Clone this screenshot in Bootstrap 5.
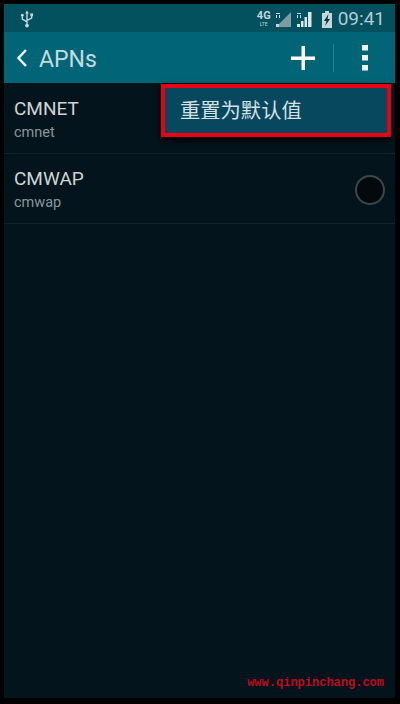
<!DOCTYPE html>
<html lang="zh">
<head>
    <meta charset="UTF-8">
    <title>APNs</title>
    <link href="https://cdn.jsdelivr.net/npm/bootstrap@5.3.0/dist/css/bootstrap.min.css" rel="stylesheet">
    <style>
        html, body { height: 100%; }
        body { background: #000; font-family: Roboto, "Noto Sans CJK SC", sans-serif; overflow: hidden; }
        .phone-frame { height: 704px; padding: 4px 5px 6px 4px; }
        .phone-screen { height: 100%; background: #03141c; }
        .status-row { height: 28px; background: #03505e; color: #b5cdd2; padding: 1px 10px 0 16px; }
        .status-time { font-size: 19px; line-height: 1; color: #b3ccd1; margin-left: 1px; }
        .net-label { font-size: 11px; font-weight: 700; line-height: 10px; color: #c3d6da; text-align: center; }
        .net-label span { display: block; font-size: 5px; line-height: 6px; font-weight: 400; }
        .app-row { height: 51px; background: #026577; color: #fff; padding: 0 27px 0 12px; }
        .app-title { font-size: 23px; line-height: 1; color: #c2dbe0; margin-left: 11px; padding-top: 4px; }
        .app-divider { width: 1px; height: 28px; background: #2a7f8e; margin: 0 28px 0 18px; }
        .apn-list { margin-top: 1px; }
        .apn-item { height: 70px; padding: 14px 10px 0 10px; border-bottom: 1px solid #10242b; }
        .apn-name { font-size: 19px; line-height: 22px; color: #cfd4d6; }
        .apn-sub { font-size: 14.5px; line-height: 18px; margin-top: 4px; color: #8b9699; }
        .apn-radio { width: 30px; height: 30px; border: 2px solid #3d484c; border-radius: 50%; background: #03090d; margin: 7px 0 0 0; }
        .reset-menu { position: absolute; top: 80px; left: 157px; width: 230px; height: 53px; background: #07485f; border: 4px solid #ea0010; color: #d5e0e2; font-size: 20.300px; padding: 1px 0 0 15px; box-shadow: 0 3px 6px #000; }
        .site-mark { font-family: "Liberation Mono", monospace; font-size: 12px; font-weight: 700; color: #c20a1c; line-height: 14px; padding: 0 11px 8px 0; }
    </style>
</head>
<body>
<div class="phone-frame">
    <div class="phone-screen d-flex flex-column position-relative">
        <!-- barra de estado -->
        <div class="status-row d-flex align-items-center flex-shrink-0">
            <svg width="14" height="18" viewBox="0 0 15 18" fill="none" stroke="#c3d6da" stroke-width="1.500">
                <path d="M7.500 2V16M2.500 6V9L7.500 12M12.500 5V8L7.500 10.500"/>
                <path d="M7.500 0L9.500 3H5.500Z" fill="#c3d6da" stroke="none"/>
                <circle cx="2.500" cy="5" r="1.500" fill="#c3d6da" stroke="none"/>
                <rect x="11" y="3" width="3" height="3" fill="#c3d6da" stroke="none"/>
                <circle cx="7.500" cy="16" r="2" fill="#c3d6da" stroke="none"/>
            </svg>
            <div class="ms-auto d-flex align-items-center gap-1">
                <div class="net-label">4G<span>LTE</span></div>
                <svg width="17" height="18" viewBox="0 0 17 18"><path d="M1 17L16 2V17Z" fill="#7f9ba1"/><rect x="1" y="14" width="3" height="3" fill="#c3d6da"/><path d="M1 3h4v1H1zM1 5h1v3H1zM4 5h1v3H4z" fill="#c3d6da"/></svg>
                <svg width="17" height="18" viewBox="0 0 17 18" fill="#dbe6e8"><path d="M1 14h3v3H1zM5 11h2.500v6H5zM8.500 7H11v10H8.500zM12 2h3.500v15H12z"/><path d="M1 3h4v1H1zM1 5h1v3H1zM4 5h1v3H4z" fill="#c3d6da"/></svg>
                <svg class="ms-1" width="12" height="18" viewBox="0 0 12 18"><path d="M1 3h3V1h4v2h3v15H1z" fill="#c3d6da"/><path d="M7.500 4L3 11h2.500L4 16l5-7H6.500z" fill="#07333d"/></svg>
                <span class="status-time">09:41</span>
            </div>
        </div>
        <!-- barra de accion -->
        <div class="app-row d-flex align-items-center flex-shrink-0">
            <svg width="12" height="20" viewBox="0 0 12 20" fill="none" stroke="#eaf3f4" stroke-width="2.500"><path d="M10 2L2.500 10L10 18"/></svg>
            <span class="app-title">APNs</span>
            <svg class="ms-auto" width="24" height="24" viewBox="0 0 24 24" fill="#fff"><path d="M10.500 0h3.500v10.500H24V14H14v10h-3.500V14H0v-3.500h10.500z"/></svg>
            <div class="app-divider"></div>
            <svg width="6" height="26" viewBox="0 0 6 26" fill="#f2f7f8"><path d="M0 0h6v5.500H0zM0 10h6v5.500H0zM0 20h6v5.500H0z"/></svg>
        </div>
        <!-- lista -->
        <div class="apn-list flex-shrink-0">
            <div class="apn-item d-flex justify-content-between">
                <div>
                    <div class="apn-name">CMNET</div>
                    <div class="apn-sub">cmnet</div>
                </div>
            </div>
            <div class="apn-item d-flex justify-content-between">
                <div>
                    <div class="apn-name">CMWAP</div>
                    <div class="apn-sub">cmwap</div>
                </div>
                <div class="apn-radio"></div>
            </div>
        </div>
        <div class="reset-menu d-flex align-items-center">重置为默认值</div>
        <div class="site-mark mt-auto text-end">www.qinpinchang.com</div>
    </div>
</div>
<script src="https://cdn.jsdelivr.net/npm/bootstrap@5.3.0/dist/js/bootstrap.bundle.min.js"></script>
</body>
</html>
